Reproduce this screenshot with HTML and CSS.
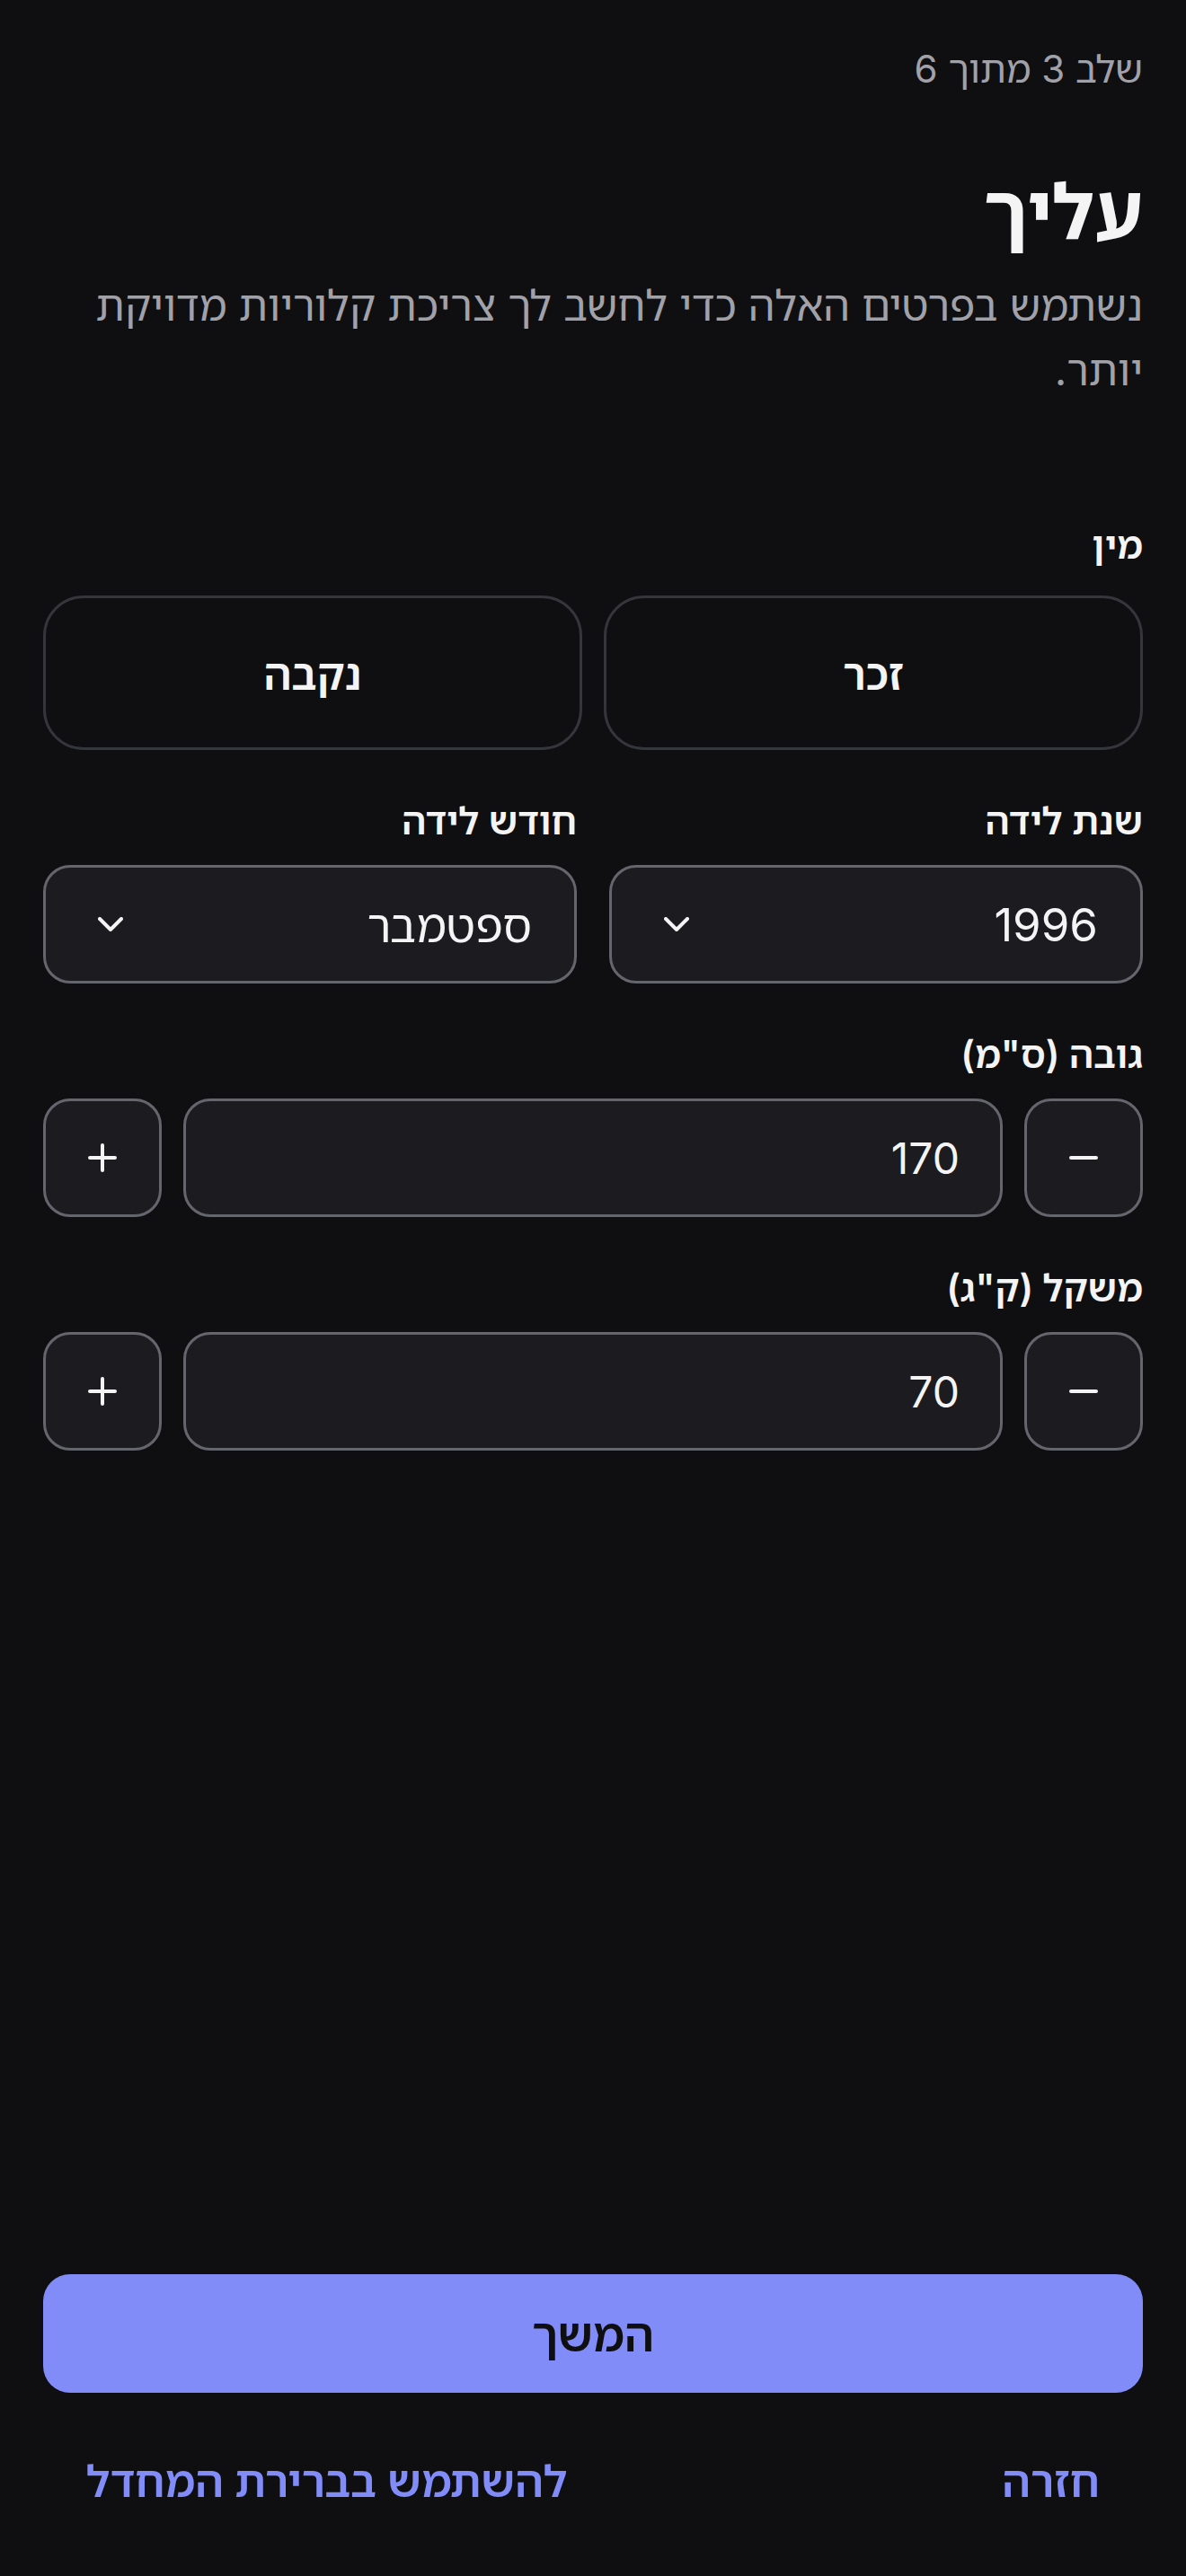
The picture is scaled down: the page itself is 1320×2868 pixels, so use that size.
FILE: index.html
```html
<!DOCTYPE html>
<html lang="he" dir="rtl">
<head>
<meta charset="utf-8">
<title>עליך</title>
<link rel="stylesheet" href="styles.css">
</head>
<body>
<main class="screen">
  <div class="content">
    <p class="step">שלב 3 מתוך 6</p>
    <h1 class="title">עליך</h1>
    <p class="subtitle">נשתמש בפרטים האלה כדי לחשב לך צריכת קלוריות מדויקת יותר.</p>

    <section class="field gender-field">
      <div class="label gender-label">מין</div>
      <div class="gender-grid">
        <button class="gender-btn">זכר</button>
        <button class="gender-btn">נקבה</button>
      </div>
    </section>

    <section class="field birth-grid">
      <div class="birth-col">
        <div class="label">שנת לידה</div>
        <div class="select">
          <span class="select-value">1996</span>
          <svg class="chevron" viewBox="0 0 28 16" width="28" height="16" aria-hidden="true"><path d="M2 2 L14 14 L26 2" fill="none" stroke="#f4f4f5" stroke-width="4" stroke-linecap="round" stroke-linejoin="round"/></svg>
        </div>
      </div>
      <div class="birth-col">
        <div class="label">חודש לידה</div>
        <div class="select">
          <span class="select-value">ספטמבר</span>
          <svg class="chevron" viewBox="0 0 28 16" width="28" height="16" aria-hidden="true"><path d="M2 2 L14 14 L26 2" fill="none" stroke="#f4f4f5" stroke-width="4" stroke-linecap="round" stroke-linejoin="round"/></svg>
        </div>
      </div>
    </section>

    <section class="field">
      <div class="label">גובה (ס"מ)</div>
      <div class="stepper">
        <button class="step-btn" aria-label="הפחת">
          <svg viewBox="0 0 32 32" width="32" height="32"><path d="M2 16 H30" stroke="#f4f4f5" stroke-width="4" stroke-linecap="round"/></svg>
        </button>
        <div class="step-input">170</div>
        <button class="step-btn" aria-label="הוסף">
          <svg viewBox="0 0 32 32" width="32" height="32"><path d="M16 2 V30 M2 16 H30" stroke="#f4f4f5" stroke-width="4" stroke-linecap="round"/></svg>
        </button>
      </div>
    </section>

    <section class="field">
      <div class="label">משקל (ק"ג)</div>
      <div class="stepper">
        <button class="step-btn" aria-label="הפחת">
          <svg viewBox="0 0 32 32" width="32" height="32"><path d="M2 16 H30" stroke="#f4f4f5" stroke-width="4" stroke-linecap="round"/></svg>
        </button>
        <div class="step-input">70</div>
        <button class="step-btn" aria-label="הוסף">
          <svg viewBox="0 0 32 32" width="32" height="32"><path d="M16 2 V30 M2 16 H30" stroke="#f4f4f5" stroke-width="4" stroke-linecap="round"/></svg>
        </button>
      </div>
    </section>
  </div>

  <footer class="footer">
    <button class="continue">המשך</button>
    <div class="links">
      <button class="link">חזרה</button>
      <button class="link">להשתמש בברירת המחדל</button>
    </div>
  </footer>
</main>
</body>
</html>
```

FILE: styles.css
```css
* {
  box-sizing: border-box;
}

html, body {
  margin: 0;
  padding: 0;
  background: #0f0f11;
}

body {
  font-family: "Inter", "Noto Sans Hebrew", "Open Sans", "Noto Sans", "DejaVu Sans", sans-serif;
  color: #f4f4f5;
}

button {
  font-family: inherit;
  color: inherit;
  background: none;
  border: none;
  padding: 0;
  cursor: pointer;
}

.screen {
  direction: rtl;
  min-height: 2868px;
  padding: 0 48px;
  display: flex;
  flex-direction: column;
}

.content {
  display: flex;
  flex-direction: column;
}

.step {
  margin: 45px 0 0;
  font-size: 42px;
  line-height: 63px;
  color: #a1a1aa;
}

.title {
  margin: 78px 0 0;
  font-size: 85px;
  line-height: 100px;
  font-weight: 700;
  color: #f4f4f5;
}

.subtitle {
  margin: 18px 0 0;
  font-size: 47px;
  line-height: 72px;
  color: #a1a1aa;
}

.field {
  margin-top: 50px;
}

.gender-field {
  margin-top: 130px;
}

.label {
  font-size: 42px;
  line-height: 58px;
  font-weight: 600;
  margin-bottom: 20px;
  color: #f4f4f5;
}

.gender-label {
  margin-bottom: 27px;
}

.gender-grid {
  display: grid;
  grid-template-columns: 1fr 1fr;
  gap: 24px;
}

.gender-btn {
  height: 172px;
  border: 3px solid #35353c;
  border-radius: 45px;
  background: #0f0f11;
  font-size: 48px;
  font-weight: 600;
  color: #f4f4f5;
}

.birth-grid {
  display: grid;
  grid-template-columns: 1fr 1fr;
  gap: 36px;
}

.select {
  height: 132px;
  border: 3px solid #65656d;
  border-radius: 30px;
  background: #1b1b20;
  display: flex;
  align-items: center;
  justify-content: space-between;
  padding: 0 47px 0 58px;
}

.select-value {
  font-size: 51px;
  color: #f4f4f5;
}

.chevron {
  display: block;
}

.stepper {
  display: grid;
  grid-template-columns: 132px 1fr 132px;
  gap: 24px;
}

.step-btn {
  height: 132px;
  border: 3px solid #65656d;
  border-radius: 30px;
  background: #1b1b20;
  display: flex;
  align-items: center;
  justify-content: center;
}

.step-btn svg {
  display: block;
}

.step-input {
  height: 132px;
  border: 3px solid #65656d;
  border-radius: 30px;
  background: #1b1b20;
  display: flex;
  align-items: center;
  padding: 0 45px;
  font-size: 48px;
  color: #f4f4f5;
}

.footer {
  margin-top: auto;
  display: flex;
  flex-direction: column;
}

.continue {
  height: 132px;
  border-radius: 30px;
  background: #818cf8;
  color: #0f0f11;
  font-size: 51px;
  font-weight: 600;
}

.links {
  margin-top: 31px;
  padding-bottom: 41px;
  display: flex;
  justify-content: space-between;
}

.link {
  height: 132px;
  padding: 0 48px;
  font-size: 49px;
  font-weight: 600;
  color: #818cf8;
}
```
